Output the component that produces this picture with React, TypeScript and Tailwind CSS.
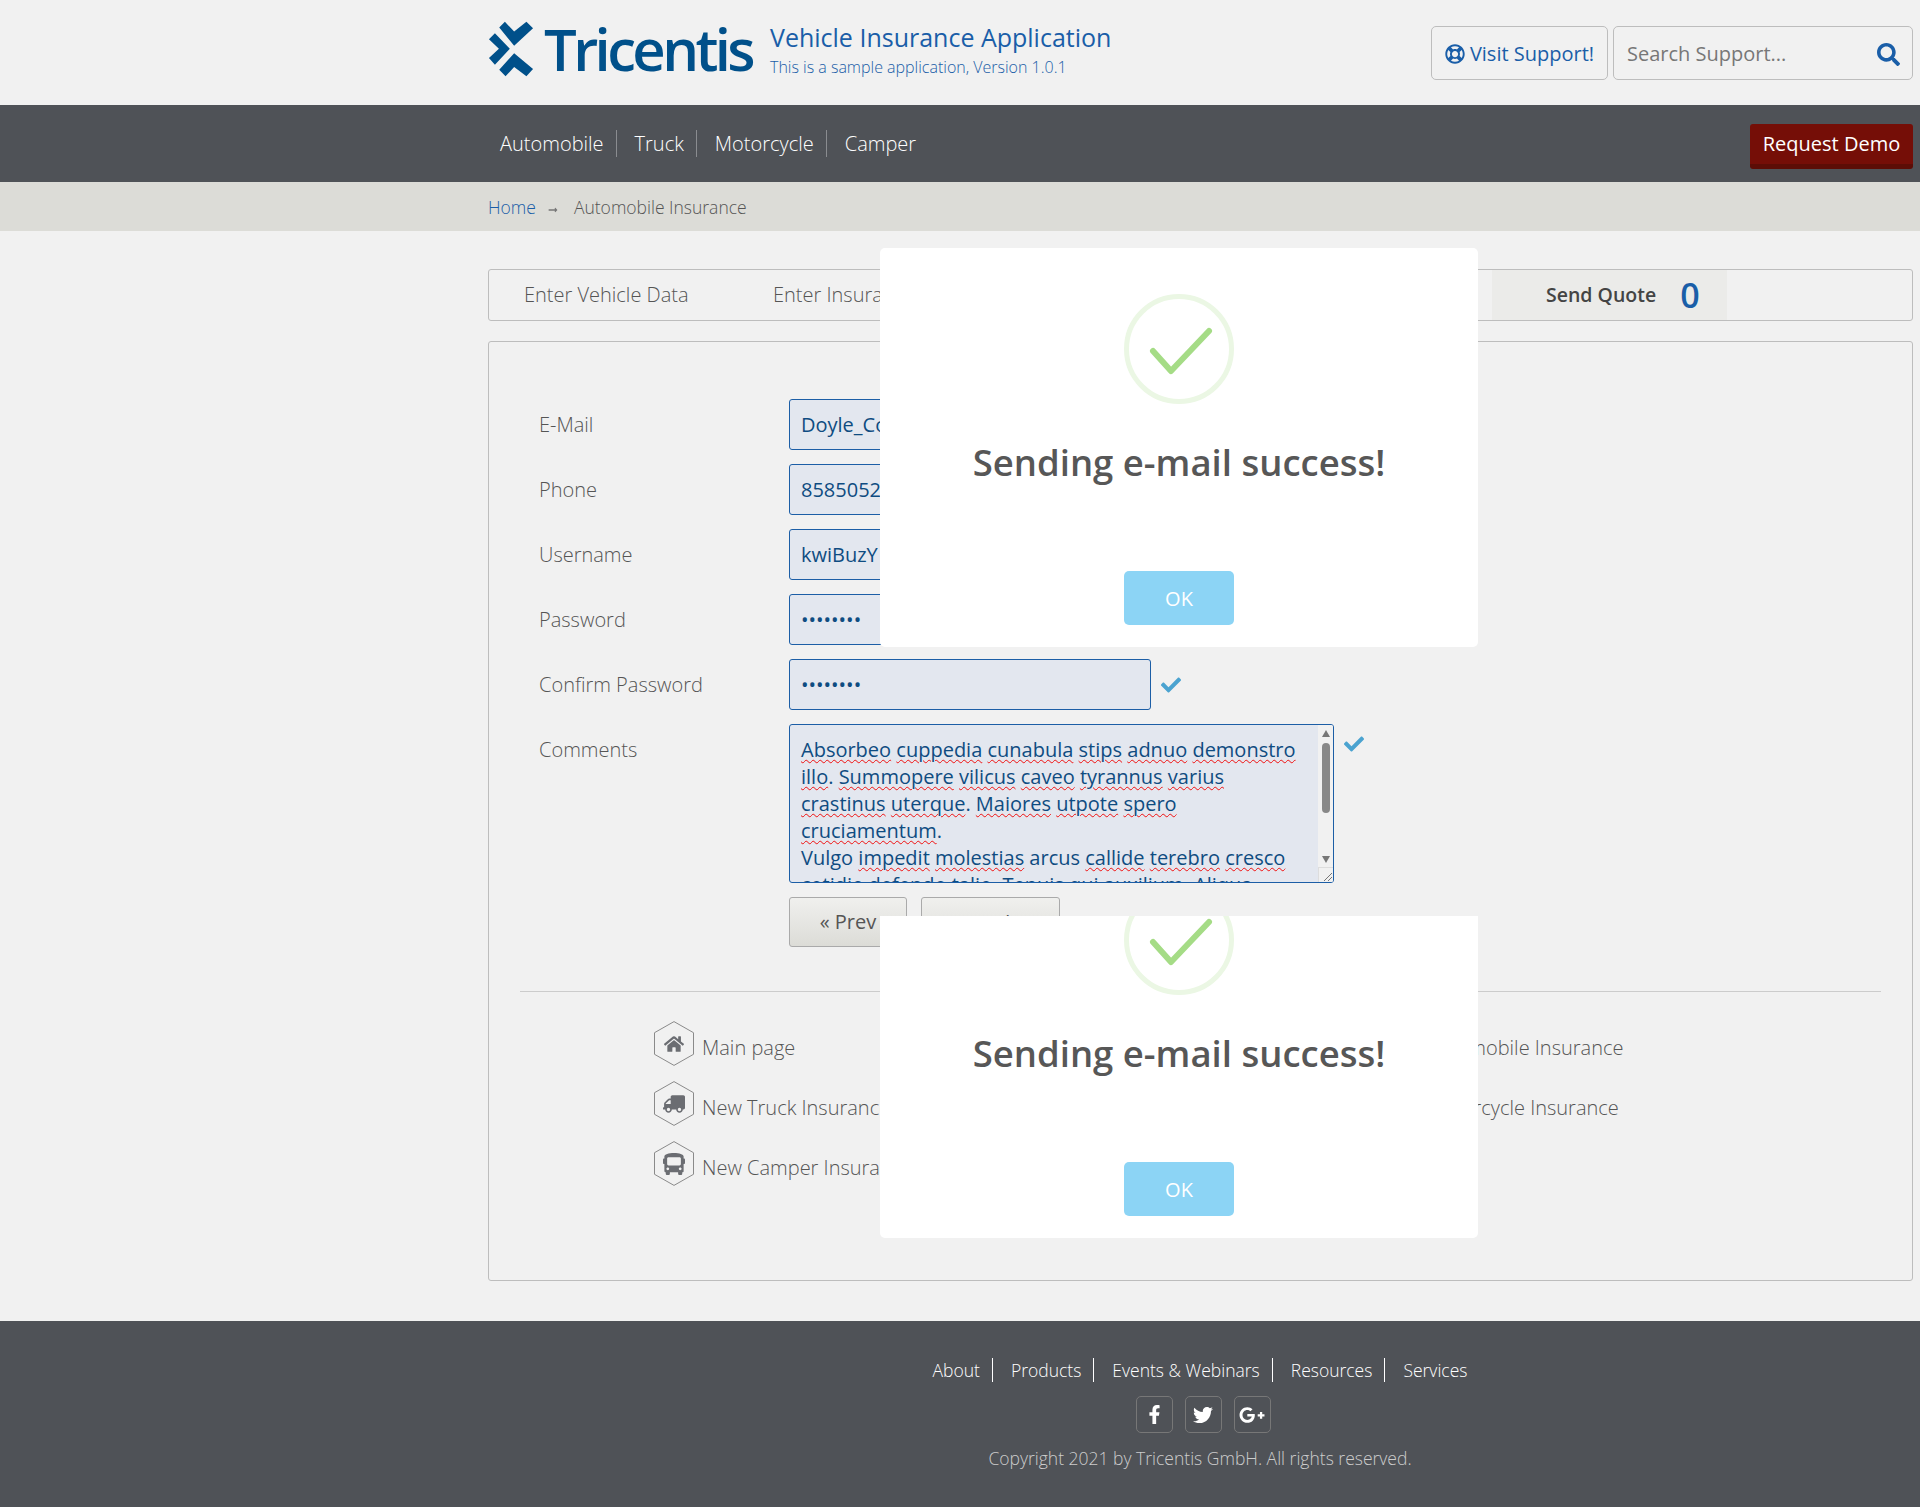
import { FaBus, FaCheck, FaFacebookF, FaGooglePlusG, FaHome, FaLongArrowAltRight, FaRegLifeRing, FaSearch, FaTruck, FaTwitter } from "react-icons/fa";

const navItems = ["Automobile", "Truck", "Motorcycle", "Camper"];
const footerLinks = ["About", "Products", "Events & Webinars", "Resources", "Services"];
const steps = ["Enter Vehicle Data", "Enter Insurant Data", "Enter Product Data", "Select Price Option"];

const fields = [
  { label: "E-Mail", value: "Doyle_Cole@hotmail.com" },
  { label: "Phone", value: "8585052417" },
  { label: "Username", value: "kwiBuzY" },
  { label: "Password", value: "••••••••" },
  { label: "Confirm Password", value: "••••••••" },
];

const truckIcon = <FaTruck size={22} className="-scale-x-100" />;

const links = [
  [{ icon: <FaHome size={20} />, text: "Main page" }, { icon: truckIcon, text: "New Truck Insurance" }, { icon: <FaBus size={22} />, text: "New Camper Insurance" }],
  [{ icon: <FaHome size={20} />, text: "New Automobile Insurance" }, { icon: truckIcon, text: "New Motorcycle Insurance" }],
];

function Spell({ children }: { children: string }) {
  return <span className="underline decoration-wavy decoration-[#f01010] decoration-1 underline-offset-[2px]">{children}</span>;
}

function Hex({ children }: { children: React.ReactNode }) {
  return (
    <div className="relative flex h-[45px] w-[40px] shrink-0 items-center justify-center text-[#6b6d72]">
      <svg className="absolute inset-0" width="40" height="45" viewBox="0 0 40 45" fill="none">
        <path d="M20 .6 39.5 11.7v21.6L20 44.4.5 33.3V11.7z" stroke="#8a8a8a" strokeWidth="1" />
      </svg>
      <span className="relative">{children}</span>
    </div>
  );
}

function SuccessDialog() {
  return (
    <div className="flex flex-col items-center">
      <div className="relative mt-[46px] flex h-[110px] w-[110px] items-center justify-center rounded-full border-[5px] border-[#ebf7e4]">
        <svg className="absolute left-[16px] top-[31px] overflow-visible" width="66" height="48" viewBox="0 0 66 48" fill="none">
          <path d="M8 21 26 41 64 1" stroke="#a5dc86" strokeWidth="6" strokeLinecap="round" strokeLinejoin="round" />
        </svg>
      </div>
      <h2 className="mt-[32px] text-[36.5px] font-semibold leading-[52px] text-[#575757]">Sending e-mail success!</h2>
      <button className="mt-[83px] h-[54px] w-[110px] rounded-[5px] bg-[#8cd4f5] pt-[1px] text-[20px] text-white">OK</button>
    </div>
  );
}

export default function App() {
  return (
    <div className="relative min-h-[1507px] bg-[#f1f1f1] font-['Open_Sans',sans-serif] text-[#555]">
      {/* Header */}
      <header className="flex h-[105px] pl-[488px] pr-[7px]">
        <div className="flex items-start pt-[13px]">
          <svg className="mt-[7px]" width="47" height="58" viewBox="10 15 140 175" fill="#00508a">
            <path d="M60 20 88 50 125 20 145 40 88 93 43 38Z" />
            <path d="M88 115 145 163 125 185 88 157 62 185 43 165Z" />
            <path d="M30 55 75 102 30 150 12 130 42 102 12 73Z" />
          </svg>
          <span className="ml-[9px] w-[209px] whitespace-nowrap text-[58px] font-semibold leading-[72px] tracking-[-3.6px] text-[#00508a]">Tricentis</span>
        </div>
        <div className="ml-[17px] pt-[20px]">
          <div className="text-[25px] font-medium leading-[34px] text-[#1a5ea8]">Vehicle Insurance Application</div>
          <div className="mt-[2px] text-[16px] font-light leading-[22px] text-[#1a5ea8]">This is a sample application, Version 1.0.1</div>
        </div>
        <div className="ml-auto flex items-center gap-[5px]">
          <a className="flex h-[54px] w-[177px] items-center justify-center gap-[5px] rounded-[5px] border border-[#bdbdbd] pt-[3px] text-[20px] text-[#1a5ea8]">
            <FaRegLifeRing size={20} />
            Visit Support!
          </a>
          <div className="flex h-[54px] w-[300px] items-center justify-between rounded-[5px] border border-[#bdbdbd] pl-[13px] pr-[12px] pt-[3px] text-[20px] text-[#777]">
            Search Support...
            <FaSearch size={23} className="text-[#1a5ea8]" />
          </div>
        </div>
      </header>

      {/* Nav */}
      <nav className="flex h-[77px] items-center bg-[#4f5257] pl-[488px] pr-[7px]">
        <div className="flex items-center pl-[12px] text-[20px] font-light text-white">
          {navItems.map((item, i) => (
            <span key={item} className={i < navItems.length - 1 ? "mr-[18px] flex h-[27px] items-center border-r border-[#8a8c90] pr-[12px]" : "flex h-[27px] items-center"}>
              {item}
            </span>
          ))}
        </div>
        <a className="ml-auto mt-[6px] flex h-[45px] w-[163px] items-center justify-center rounded-[3px] border-b-[5px] border-[#5c0d06] bg-[#750e07] text-[20px] text-white">Request Demo</a>
      </nav>

      {/* Breadcrumb */}
      <div className="flex h-[49px] items-center bg-[#dcdcd7] pl-[488px] pt-[1px] text-[17.5px] font-light">
        <a className="text-[#1a5ea8]">Home</a>
        <FaLongArrowAltRight size={10} className="ml-[12px] mr-[16px] mt-[6px] text-[#777]" />
        <span>Automobile Insurance</span>
      </div>

      <main className="pb-[40px] pl-[488px] pr-[7px] pt-[38px]">
        {/* Step tabs */}
        <div className="flex h-[52px] items-stretch rounded-[3px] border border-[#bdbdbd] text-[20px] font-light">
          <div className="flex items-center">
            {steps.map((step, i) => (
              <span key={step} className={i === 0 ? "ml-[35px] w-[249px]" : "w-[235px] whitespace-nowrap"}>{step}</span>
            ))}
          </div>
          <div className="ml-[14px] flex w-[235px] items-center bg-[#ebebe9] pl-[54px]">
            <span className="text-[19.5px] font-semibold text-[#444]">Send Quote</span>
            <span className="ml-[24px] text-[34px] font-semibold text-[#1a5ea8]">0</span>
          </div>
        </div>

        {/* Form panel */}
        <section className="mt-[20px] h-[940px] rounded-[3px] border border-[#bdbdbd] px-[31px] pt-[57px]">
          <div className="flex flex-col gap-[14px]">
            {fields.map((f) => (
              <div key={f.label} className="flex items-center">
                <label className="w-[269px] pl-[19px] text-[20px] font-light">{f.label}</label>
                <div className="flex h-[51px] w-[362px] items-center rounded-[3px] border border-[#1c5ea6] bg-[#e3e7ef] pl-[11px] text-[20px] text-[#0f4c81]">
                  {f.value}
                </div>
                <FaCheck size={20} className="ml-[10px] text-[#4ba3d0]" />
              </div>
            ))}
            <div className="flex items-start">
              <label className="w-[269px] pl-[19px] pt-[11px] text-[20px] font-light">Comments</label>
              <div className="relative h-[159px] w-[545px] overflow-hidden rounded-[3px] border border-[#1c5ea6] bg-[#e3e7ef] pl-[11px] pr-[23px] pt-[11px] text-[20px] leading-[27px] text-[#0f4c81]">
                <Spell>Absorbeo</Spell> <Spell>cuppedia</Spell> <Spell>cunabula</Spell> <Spell>stips</Spell> <Spell>adnuo</Spell> <Spell>demonstro</Spell> <Spell>illo</Spell>. <Spell>Summopere</Spell> <Spell>vilicus</Spell> <Spell>caveo</Spell> <Spell>tyrannus</Spell> <Spell>varius</Spell> <Spell>crastinus</Spell> <Spell>uterque</Spell>. <Spell>Maiores</Spell> <Spell>utpote</Spell> <Spell>spero</Spell> <Spell>cruciamentum</Spell>.
                <br />
                Vulgo <Spell>impedit</Spell> <Spell>molestias</Spell> arcus <Spell>callide</Spell> <Spell>terebro</Spell> <Spell>cresco</Spell> <Spell>cotidie</Spell> <Spell>defendo</Spell> <Spell>talio</Spell>. <Spell>Tenuis</Spell> qui <Spell>auxilium</Spell>. <Spell>Aliqua</Spell>
                {/* Scrollbar */}
                <div className="absolute bottom-0 right-0 top-0 flex w-[15px] flex-col items-center bg-[#f1f1f1] pt-[5px]">
                  <div className="h-0 w-0 border-x-[4px] border-b-[7px] border-x-transparent border-b-[#777]" />
                  <div className="mt-[6px] h-[70px] w-[8px] rounded-[4px] bg-[#888]" />
                  <div className="mt-[43px] h-0 w-0 border-x-[4px] border-t-[7px] border-x-transparent border-t-[#777]" />
                </div>
                {/* Resize grip */}
                <div className="absolute bottom-0 right-0 h-[15px] w-[15px] border-l border-t border-[#ddd] bg-[#f1f1f1]">
                  <svg width="14" height="14" viewBox="0 0 14 14" fill="none" stroke="#777" strokeWidth="1">
                    <path d="M5 13 13 5M9 13 13 9" />
                  </svg>
                </div>
              </div>
              <FaCheck size={20} className="ml-[10px] mt-[10px] text-[#4ba3d0]" />
            </div>
          </div>

          <div className="ml-[269px] mt-[14px] flex gap-[14px]">
            <button className="h-[50px] w-[118px] rounded-[3px] border border-[#aaa] bg-gradient-to-b from-[#f0f0ee] to-[#dcdcd7] text-[20px] text-[#555]">« Prev</button>
            <button className="h-[50px] w-[139px] rounded-[3px] border border-[#aaa] bg-gradient-to-b from-[#f0f0ee] to-[#dcdcd7] pl-[8px] pt-[1px] text-[20px] text-[#555]">Send »</button>
          </div>

          <hr className="mt-[44px] border-[#ccc]" />

          {/* Link list */}
          <div className="ml-[134px] mt-[29px] flex">
            <div className="flex w-[678px] flex-col gap-[15px]">
              {links[0].map((l) => (
                <div key={l.text} className="flex items-center gap-[8px]">
                  <Hex>{l.icon}</Hex>
                  <span className="mt-[8px] text-[20px] font-light">{l.text}</span>
                </div>
              ))}
            </div>
            <div className="flex flex-col gap-[15px]">
              {links[1].map((l) => (
                <div key={l.text} className="flex items-center gap-[9px]">
                  <Hex>{l.icon}</Hex>
                  <span className="mt-[8px] text-[20px] font-light">{l.text}</span>
                </div>
              ))}
            </div>
          </div>
        </section>
      </main>

      {/* Footer */}
      <footer className="flex h-[186px] flex-col items-center bg-[#4f5257] pl-[480px] pt-[37px] text-white">
        <div className="flex items-center text-[17.5px] font-light">
          {footerLinks.map((item, i) => (
            <span key={item} className={i < footerLinks.length - 1 ? "mr-[18px] flex h-[24px] items-center border-r border-white pr-[12px]" : "flex h-[24px] items-center"}>
              {item}
            </span>
          ))}
        </div>
        <div className="ml-[6px] mt-[14px] flex gap-[12px]">
          {[<FaFacebookF size={19} />, <FaTwitter size={20} />, <FaGooglePlusG size={26} />].map((icon, i) => (
            <a key={i} className="flex h-[37px] w-[37px] items-center justify-center rounded-[5px] border border-[#777]">{icon}</a>
          ))}
        </div>
        <div className="mt-[12px] text-[17.5px] font-light text-[#ccc]">Copyright 2021 by Tricentis GmbH. All rights reserved.</div>
      </footer>

      {/* Success dialogs stacked over the page */}
      <div className="absolute left-[880px] top-[248px] h-[399px] w-[598px] rounded-[5px] bg-white">
        <SuccessDialog />
      </div>
      <div className="absolute left-[880px] top-[916px] h-[322px] w-[598px] overflow-hidden rounded-b-[5px] bg-white">
        <div className="-mt-[77px]">
          <SuccessDialog />
        </div>
      </div>
    </div>
  );
}
